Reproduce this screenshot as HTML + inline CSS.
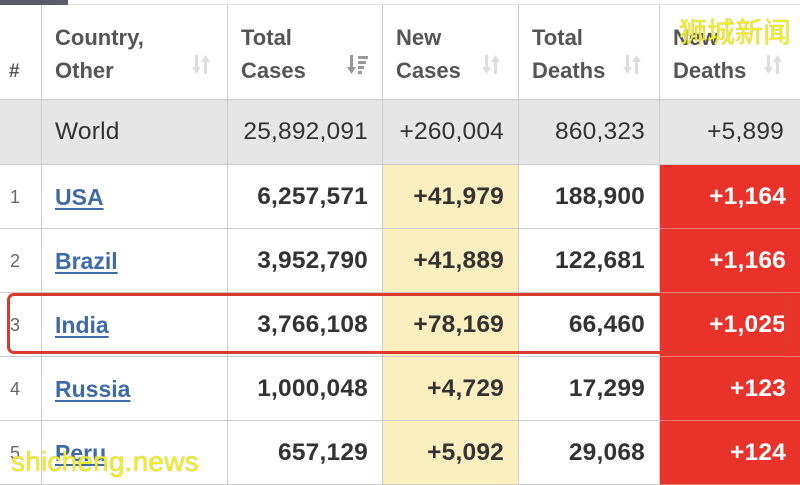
<!DOCTYPE html>
<html><head><meta charset="utf-8"><style>
*{margin:0;padding:0;box-sizing:border-box}
body{width:800px;height:485px;overflow:hidden;background:#fff;font-family:"Liberation Sans",Arial,sans-serif;position:relative}
.c{position:absolute;border-right:1px solid #ccc;border-bottom:1px solid #ccc}
.h{font-weight:bold;color:#555;font-size:22px;line-height:33px;padding:16px 0 0 13px}
.n{text-align:right;padding-right:14px;font-size:24.5px;line-height:64px;color:#333;font-weight:bold;letter-spacing:0.2px}
.w{font-weight:normal;background:#e6e6e6;color:#333}
.y{background:#fbefc0}
.r{background:#e8322a;color:#fff;border-right:none;border-bottom:1px solid #f07a70}
.idx{font-size:18px;color:#666;line-height:64px;padding-left:10px;font-weight:normal}
.cty{font-size:23px;font-weight:bold;line-height:64px;padding-left:13px}
.cty a{color:#3e6aa6;text-decoration:underline;text-decoration-thickness:2px;text-underline-offset:3px}
svg.s{position:absolute}
</style></head><body>
<div style="position:absolute;left:0;top:0;width:68px;height:5px;background:#5c5c68"></div>
<div style="position:absolute;left:68px;top:4px;width:732px;height:1px;background:#ddd"></div>

<!-- header -->
<div class="c h" style="left:0;top:5px;width:42px;height:95px;padding:50px 0 0 9px;font-size:19px">#</div>
<div class="c h" style="left:42px;top:5px;width:186px;height:95px">Country,<br>Other</div>
<div class="c h" style="left:228px;top:5px;width:155px;height:95px">Total<br>Cases</div>
<div class="c h" style="left:383px;top:5px;width:136px;height:95px">New<br>Cases</div>
<div class="c h" style="left:519px;top:5px;width:141px;height:95px">Total<br>Deaths</div>
<div class="c h" style="left:660px;top:5px;width:140px;height:95px;border-right:none">New<br>Deaths</div>
<svg class="s" width="0" height="0"><defs><g id="ar" fill="#ddd"><rect x="3" y="0" width="3" height="14"/><polygon points="0,12 9,12 4.5,19"/><rect x="12" y="5" width="3" height="14"/><polygon points="9,7 18,7 13.5,0"/></g></defs></svg>
<svg class="s" style="left:192px;top:55px" width="18" height="20"><use href="#ar"/></svg>
<svg class="s" style="left:482px;top:55px" width="18" height="20"><use href="#ar"/></svg>
<svg class="s" style="left:623px;top:55px" width="18" height="20"><use href="#ar"/></svg>
<svg class="s" style="left:764px;top:55px" width="18" height="20"><use href="#ar"/></svg>
<svg class="s" style="left:347px;top:55px" width="22" height="20"><g fill="#999"><rect x="3" y="0" width="3" height="14"/><polygon points="0,12 9,12 4.5,19"/><rect x="11" y="1" width="10" height="3"/><rect x="11" y="6" width="8" height="3"/><rect x="11" y="11" width="6" height="3"/><rect x="11" y="16" width="4" height="3"/></g></svg>
<div style="position:absolute;left:0;top:100px;width:800px;height:3px;background:linear-gradient(#aaa,#ddd)"></div>

<!-- world -->
<div class="c n w" style="left:0;top:100px;width:42px;height:65px"></div>
<div class="c n w" style="left:42px;top:100px;width:186px;height:65px;text-align:left;padding-left:13px">World</div>
<div class="c n w" style="left:228px;top:100px;width:155px;height:65px">25,892,091</div>
<div class="c n w" style="left:383px;top:100px;width:136px;height:65px">+260,004</div>
<div class="c n w" style="left:519px;top:100px;width:141px;height:65px">860,323</div>
<div class="c n w" style="left:660px;top:100px;width:140px;height:65px;border-right:none;padding-right:16px">+5,899</div>

<!-- rows -->
<div class="c idx" style="left:0;top:165px;width:42px;height:64px">1</div>
<div class="c cty" style="left:42px;top:165px;width:186px;height:64px"><a>USA</a></div>
<div class="c n" style="left:228px;top:165px;width:155px;height:64px">6,257,571</div>
<div class="c n y" style="left:383px;top:165px;width:136px;height:64px">+41,979</div>
<div class="c n" style="left:519px;top:165px;width:141px;height:64px">188,900</div>
<div class="c n r" style="left:660px;top:165px;width:140px;height:64px">+1,164</div>

<div class="c idx" style="left:0;top:229px;width:42px;height:64px">2</div>
<div class="c cty" style="left:42px;top:229px;width:186px;height:64px"><a>Brazil</a></div>
<div class="c n" style="left:228px;top:229px;width:155px;height:64px">3,952,790</div>
<div class="c n y" style="left:383px;top:229px;width:136px;height:64px">+41,889</div>
<div class="c n" style="left:519px;top:229px;width:141px;height:64px">122,681</div>
<div class="c n r" style="left:660px;top:229px;width:140px;height:64px">+1,166</div>

<div class="c idx" style="left:0;top:293px;width:42px;height:64px">3</div>
<div class="c cty" style="left:42px;top:293px;width:186px;height:64px"><a>India</a></div>
<div class="c n" style="left:228px;top:293px;width:155px;height:64px">3,766,108</div>
<div class="c n y" style="left:383px;top:293px;width:136px;height:64px">+78,169</div>
<div class="c n" style="left:519px;top:293px;width:141px;height:64px">66,460</div>
<div class="c n r" style="left:660px;top:293px;width:140px;height:64px">+1,025</div>

<div class="c idx" style="left:0;top:357px;width:42px;height:64px">4</div>
<div class="c cty" style="left:42px;top:357px;width:186px;height:64px"><a>Russia</a></div>
<div class="c n" style="left:228px;top:357px;width:155px;height:64px">1,000,048</div>
<div class="c n y" style="left:383px;top:357px;width:136px;height:64px">+4,729</div>
<div class="c n" style="left:519px;top:357px;width:141px;height:64px">17,299</div>
<div class="c n r" style="left:660px;top:357px;width:140px;height:64px">+123</div>

<div class="c idx" style="left:0;top:421px;width:42px;height:64px">5</div>
<div class="c cty" style="left:42px;top:421px;width:186px;height:64px"><a>Peru</a></div>
<div class="c n" style="left:228px;top:421px;width:155px;height:64px">657,129</div>
<div class="c n y" style="left:383px;top:421px;width:136px;height:64px">+5,092</div>
<div class="c n" style="left:519px;top:421px;width:141px;height:64px">29,068</div>
<div class="c n r" style="left:660px;top:421px;width:140px;height:64px">+124</div>

<!-- highlight -->
<div style="position:absolute;left:7px;top:293px;width:780px;height:61px;border:3px solid #dc3a2c;border-radius:7px"></div>

<!-- watermarks -->
<div style="position:absolute;left:679px;top:16px;font-family:'Liberation Sans','Noto Sans CJK SC',sans-serif;font-size:28px;color:#f2ef1c;line-height:34px;text-shadow:0 0 1px #888">狮城新闻</div>
<div style="position:absolute;left:11px;top:446px;font-size:28px;color:#f2ef1c;line-height:32px;letter-spacing:0.2px;text-shadow:0 0 1px #888">shicheng.news</div>
</body></html>
